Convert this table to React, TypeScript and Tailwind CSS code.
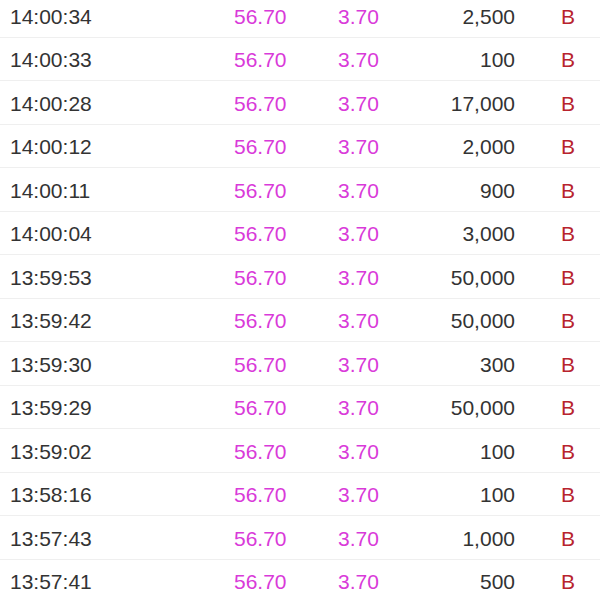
const trades: [string, string][] = [
  ['14:00:34', '2,500'],
  ['14:00:33', '100'],
  ['14:00:28', '17,000'],
  ['14:00:12', '2,000'],
  ['14:00:11', '900'],
  ['14:00:04', '3,000'],
  ['13:59:53', '50,000'],
  ['13:59:42', '50,000'],
  ['13:59:30', '300'],
  ['13:59:29', '50,000'],
  ['13:59:02', '100'],
  ['13:58:16', '100'],
  ['13:57:43', '1,000'],
  ['13:57:41', '500'],
];

export default function App() {
  return (
    <div className="h-[600px] w-[600px] overflow-hidden bg-white font-['Liberation_Sans',Arial,sans-serif] text-[21px] text-[#333]">
      <div className="-mt-[6px] flex flex-col">
        {trades.map(([time, vol], i) => (
          <div key={i} className="flex h-[43.5px] shrink-0 items-center border-b border-[#efefef] pt-[2px]">
            <span className="w-[234px] pl-[10px]">{time}</span>
            <span className="w-[104px] text-[#d93ad9]">56.70</span>
            <span className="w-[90px] text-[#d93ad9]">3.70</span>
            <span className="w-[87px] text-right">{vol}</span>
            <span className="pl-[46px] text-[#b8232e]">B</span>
          </div>
        ))}
      </div>
    </div>
  );
}
